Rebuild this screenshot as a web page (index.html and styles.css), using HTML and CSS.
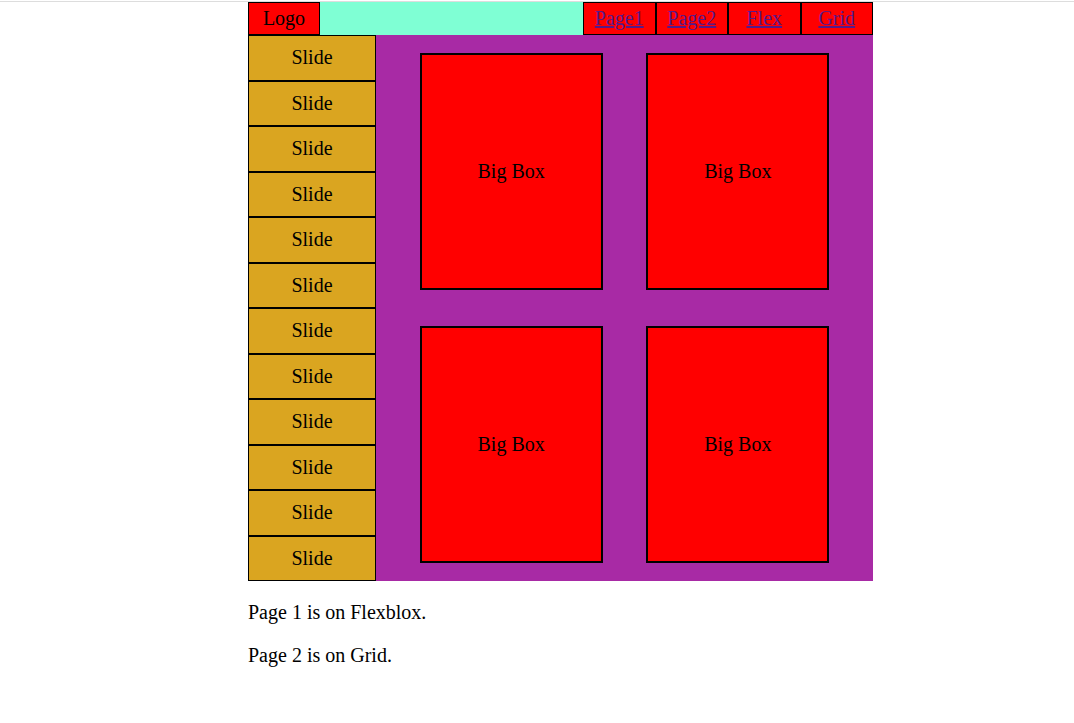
FILE: index.html
```html
<!DOCTYPE html>
<html lang="en">
<head>
    <meta charset="UTF-8">
    <meta name="viewport" content="width=device-width, initial-scale=1.0">
    <title>Flex Page</title>
    <link rel="stylesheet" href="styles.css">
</head>
<body>
    <div class="top-line"></div>
    <div class="page">
        <header class="header">
            <div class="logo">Logo</div>
            <nav class="nav">
                <a href="#" class="nav-link">Page1</a>
                <a href="#" class="nav-link">Page2</a>
                <a href="#" class="nav-link">Flex</a>
                <a href="#" class="nav-link">Grid</a>
            </nav>
        </header>
        <main class="main">
            <aside class="sidebar">
                <div class="slide">Slide</div>
                <div class="slide">Slide</div>
                <div class="slide">Slide</div>
                <div class="slide">Slide</div>
                <div class="slide">Slide</div>
                <div class="slide">Slide</div>
                <div class="slide">Slide</div>
                <div class="slide">Slide</div>
                <div class="slide">Slide</div>
                <div class="slide">Slide</div>
                <div class="slide">Slide</div>
                <div class="slide">Slide</div>
            </aside>
            <section class="content">
                <div class="big-box">Big Box</div>
                <div class="big-box">Big Box</div>
                <div class="big-box">Big Box</div>
                <div class="big-box">Big Box</div>
            </section>
        </main>
        <p class="note">Page 1 is on Flexblox.</p>
        <p class="note">Page 2 is on Grid.</p>
    </div>
</body>
</html>
```

FILE: styles.css
```css
* {
    box-sizing: border-box;
}

body {
    margin: 0;
    font-family: "Liberation Serif", "Times New Roman", serif;
    font-size: 20px;
    color: #000;
    background: #fff;
}

.top-line {
    height: 1px;
    margin-top: 1px;
    background: #dddddd;
}

.page {
    width: 625px;
    margin-left: 248px;
}

.header {
    display: flex;
    height: 33px;
    background: aquamarine;
}

.logo {
    width: 72px;
    display: flex;
    justify-content: center;
    align-items: center;
    background: red;
    border: 1px solid #000;
}

.nav {
    display: flex;
    margin-left: auto;
}

.nav-link {
    width: 72.5px;
    display: flex;
    justify-content: center;
    align-items: center;
    background: red;
    border: 1px solid #000;
    color: #551a8b;
}

.main {
    display: flex;
    height: 546px;
}

.sidebar {
    width: 128px;
    display: flex;
    flex-direction: column;
}

.slide {
    flex: 1;
    display: flex;
    justify-content: center;
    align-items: center;
    background: goldenrod;
    border: 1px solid #000;
}

.content {
    flex: 1;
    display: flex;
    flex-wrap: wrap;
    justify-content: space-evenly;
    align-content: space-around;
    background: #a82aa5;
}

.big-box {
    width: 183px;
    height: 237px;
    display: flex;
    justify-content: center;
    align-items: center;
    background: red;
    border: 2px solid #000;
}

.note {
    margin: 20px 0;
}
```
